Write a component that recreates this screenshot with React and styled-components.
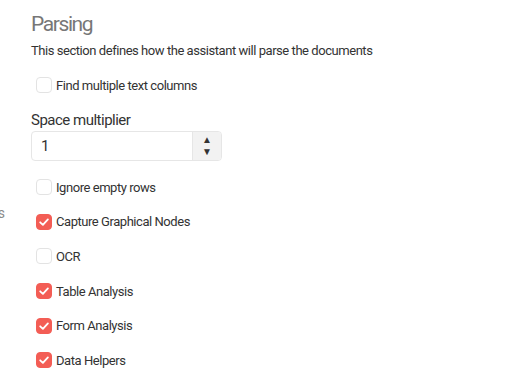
import React from "react";
import styled, { createGlobalStyle } from "styled-components";

const GlobalStyle = createGlobalStyle`
  body {
    margin: 0;
    background: #ffffff;
    font-family: Roboto, "Liberation Sans", sans-serif;
  }
`;

const options = [
  { id: "ignore", label: "Ignore empty rows", checked: false },
  { id: "graph", label: "Capture Graphical Nodes", checked: true },
  { id: "ocr", label: "OCR", checked: false },
  { id: "table", label: "Table Analysis", checked: true },
  { id: "form", label: "Form Analysis", checked: true },
  { id: "helpers", label: "Data Helpers", checked: true },
];

function Check({ checked }) {
  return (
    <Box $checked={checked}>
      {checked && (
        <svg width="12" height="12" viewBox="0 0 12 12">
          <path d="M2.2 6.3 L4.9 8.9 L9.9 3.4" fill="none" stroke="#fff" strokeWidth="1.8" strokeLinecap="round" strokeLinejoin="round" />
        </svg>
      )}
    </Box>
  );
}

function App() {
  return (
    <Page>
      <GlobalStyle />
      <Sidebar>
        <SideItem>Settings</SideItem>
      </Sidebar>
      <Main>
        <Title>Parsing</Title>
        <Description>This section defines how the assistant will parse the documents</Description>
        <FirstRow>
          <Check checked={false} />
          <span>Find multiple text columns</span>
        </FirstRow>
        <Field>
          <FieldLabel>Space multiplier</FieldLabel>
          <NumberInput>
            <Value>1</Value>
            <Spinner>
              <span>▲</span>
              <span>▼</span>
            </Spinner>
          </NumberInput>
        </Field>
        <OptionList>
          {options.map((item) => (
            <OptionRow key={item.id}>
              <Check checked={item.checked} />
              <span>{item.label}</span>
            </OptionRow>
          ))}
        </OptionList>
      </Main>
    </Page>
  );
}

const Page = styled.div`
  display: flex;
  width: 515px;
  height: 386px;
  overflow: hidden;
`;

const Sidebar = styled.nav`
  width: 5px;
  overflow: hidden;
  display: flex;
  justify-content: flex-end;
  padding-top: 205px;
`;

const SideItem = styled.div`
  white-space: nowrap;
  font-size: 14px;
  color: #8a8a8a;
  height: 20px;
`;

const Main = styled.main`
  flex: 1;
  padding: 12px 0 0 26px;
  display: flex;
  flex-direction: column;
`;

const Title = styled.h2`
  margin: 0;
  font-size: 21px;
  line-height: 24px;
  font-weight: 400;
  letter-spacing: -1.4px;
  color: #777777;
`;

const Description = styled.p`
  margin: 7px 0 0;
  font-size: 13px;
  line-height: 16px;
  letter-spacing: -0.45px;
  color: #333333;
`;

const OptionRow = styled.label`
  display: flex;
  align-items: center;
  gap: 4px;
  height: 20px;
  padding-left: 5px;
  font-size: 13px;
  letter-spacing: -0.45px;
  color: #333333;
`;

const FirstRow = styled(OptionRow)`
  margin-top: 16px;
`;

const Box = styled.span`
  width: 16px;
  height: 16px;
  box-sizing: border-box;
  border-radius: 4px;
  display: flex;
  align-items: center;
  justify-content: center;
  background: ${(p) => (p.$checked ? "#f35d55" : "#ffffff")};
  border: 1px solid ${(p) => (p.$checked ? "#f35d55" : "#e3e3e3")};
`;

const Field = styled.div`
  display: flex;
  flex-direction: column;
  gap: 2px;
  margin-top: 16px;
`;

const FieldLabel = styled.div`
  font-size: 15px;
  line-height: 18px;
  letter-spacing: -0.5px;
  color: #333333;
`;

const NumberInput = styled.div`
  display: flex;
  width: 191px;
  height: 30px;
  box-sizing: border-box;
  border: 1px solid #e6e6e6;
  border-radius: 4px;
  overflow: hidden;
`;

const Value = styled.div`
  flex: 1;
  display: flex;
  align-items: center;
  padding-left: 9px;
  font-size: 15px;
  color: #333333;
`;

const Spinner = styled.div`
  width: 28px;
  background: #f2f2f2;
  border-left: 1px solid #e6e6e6;
  display: flex;
  flex-direction: column;
  align-items: center;
  justify-content: center;
  font-size: 10px;
  line-height: 12px;
  color: #333333;
`;

const OptionList = styled.div`
  display: flex;
  flex-direction: column;
  gap: 14.7px;
  margin-top: 16px;
`;

export default App;
